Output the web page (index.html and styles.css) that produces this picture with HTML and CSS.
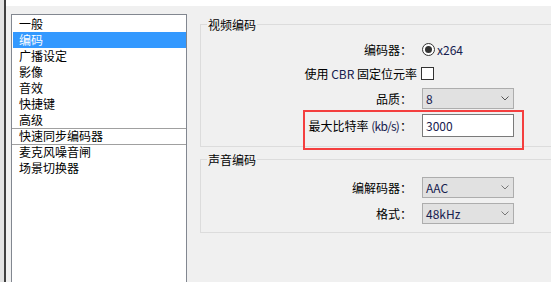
FILE: index.html
```
<!DOCTYPE html>
<html lang="zh-CN">
<head>
<meta charset="utf-8">
<title>设置</title>
<link rel="stylesheet" href="styles.css">
</head>
<body>
<div class="window">
  <div class="edge"></div>
  <div class="main">
    <div class="topbar"></div>
    <div class="content">
      <ul class="list">
        <li class="item">一般</li>
        <li class="item sel">编码</li>
        <li class="item">广播设定</li>
        <li class="item">影像</li>
        <li class="item">音效</li>
        <li class="item">快捷键</li>
        <li class="item">高级</li>
        <li class="item sep">快速同步编码器</li>
        <li class="item sep">麦克风噪音闸</li>
        <li class="item">场景切换器</li>
      </ul>
      <div class="panels">
        <section class="group g-video">
          <div class="group-title">视频编码</div>
          <div class="form form-video">
            <div class="label"><span>编码器<span class="colon">：</span></span></div>
            <div class="ctrl radio-wrap"><span class="radio"></span><span class="lat">x264</span></div>
            <div class="label label-check"><span>使用 <span class="lat">CBR</span> 固定位元率</span></div>
            <div class="ctrl"><span class="checkbox"></span></div>
            <div class="label"><span>品质<span class="colon">：</span></span></div>
            <div class="ctrl"><div class="combo"><span class="lat">8</span><svg class="chev" width="8" height="5" viewBox="0 0 8 5"><polyline points="0.5,0.5 4,4 7.5,0.5" fill="none" stroke="#555" stroke-width="1"/></svg></div></div>
            <div class="label"><span>最大比特率 <span class="lat kbs">(kb/s)</span><span class="colon">：</span></span></div>
            <div class="ctrl"><div class="input lat">3000</div></div>
          </div>
        </section>
        <section class="group g-audio">
          <div class="group-title">声音编码</div>
          <div class="form form-audio">
            <div class="label"><span>编解码器<span class="colon">：</span></span></div>
            <div class="ctrl"><div class="combo"><span class="lat">AAC</span><svg class="chev" width="8" height="5" viewBox="0 0 8 5"><polyline points="0.5,0.5 4,4 7.5,0.5" fill="none" stroke="#777" stroke-width="1"/></svg></div></div>
            <div class="label"><span>格式<span class="colon">：</span></span></div>
            <div class="ctrl"><div class="combo"><span class="lat">48kHz</span><svg class="chev" width="8" height="5" viewBox="0 0 8 5"><polyline points="0.5,0.5 4,4 7.5,0.5" fill="none" stroke="#777" stroke-width="1"/></svg></div></div>
          </div>
        </section>
      </div>
    </div>
  </div>
  <div class="mark"></div>
</div>
</body>
</html>
```
FILE: styles.css
```
html, body {
  margin: 0;
  padding: 0;
}
body {
  width: 551px;
  height: 282px;
  overflow: hidden;
  background: #f0f0f0;
  font-family: "Noto Sans CJK SC", sans-serif;
  font-size: 12px;
  color: #000;
}
.window {
  position: relative;
  display: flex;
  height: 282px;
  overflow: hidden;
}
.edge {
  flex: none;
  width: 4px;
  background: #e2e2e2;
  border-right: 2px solid #3f3f3f;
}
.main {
  flex: 1;
  display: flex;
  flex-direction: column;
  min-width: 0;
}
.topbar {
  flex: none;
  height: 6px;
  background: #fff;
}
.content {
  flex: 1;
  display: flex;
  gap: 13px;
  padding: 8px 0 0 5px;
  min-height: 0;
}
.list {
  flex: none;
  box-sizing: border-box;
  width: 176px;
  height: 290px;
  margin: 0;
  padding: 1px 0 0 1px;
  list-style: none;
  background: #fff;
  border: 1px solid #828790;
}
.item {
  height: 16px;
  line-height: 16px;
  padding-left: 6px;
  white-space: nowrap;
  overflow: hidden;
}
.item.sel {
  background: #3399ff;
  color: #fff;
}
.item.sep {
  margin-left: -1px;
  padding-left: 7px;
  background: linear-gradient(#a0a0a0, #a0a0a0) left top / 100% 1px no-repeat;
}
.panels {
  flex: none;
  width: 400px;
  display: flex;
  flex-direction: column;
  gap: 12px;
  padding-top: 10px;
}
.group {
  box-sizing: border-box;
  border: 1px solid #dcdcdc;
}
.g-video {
  height: 123px;
}
.g-audio {
  height: 74px;
}
.group-title {
  width: max-content;
  margin: -7px 0 0 6px;
  padding: 0 1px;
  line-height: 14px;
  background: #f0f0f0;
}
.form {
  display: grid;
  grid-template-columns: 211px 92px;
  column-gap: 10px;
}
.form-video {
  margin-top: 6px;
  grid-template-rows: 22px 26px 24px 30px;
}
.form-audio {
  margin-top: 7px;
  grid-template-rows: 26px 26px;
}
.label {
  display: flex;
  align-items: center;
  justify-content: flex-end;
  white-space: nowrap;
}
.label-check {
  margin-right: -5px;
}
.colon {
  font-family: "Noto Sans CJK JP", sans-serif;
}
.lat {
  color: #16204e;
}
.kbs {
  letter-spacing: -0.8px;
  margin-right: 1px;
}
.ctrl {
  display: flex;
  align-items: center;
}
.radio-wrap {
  gap: 2px;
}
.radio {
  box-sizing: border-box;
  width: 13px;
  height: 13px;
  border: 1px solid #333;
  border-radius: 50%;
  background: #fff;
  display: flex;
  align-items: center;
  justify-content: center;
}
.radio::after {
  content: "";
  width: 7px;
  height: 7px;
  border-radius: 50%;
  background: #333;
}
.checkbox {
  box-sizing: border-box;
  width: 13px;
  height: 13px;
  margin-left: -1px;
  border: 1px solid #333;
  background: #fff;
}
.combo {
  box-sizing: border-box;
  width: 92px;
  height: 21px;
  padding: 0 4px 0 3px;
  border: 1px solid #adadad;
  background: #e1e1e1;
  display: flex;
  align-items: center;
  justify-content: space-between;
}
.chev {
  display: block;
}
.input {
  box-sizing: border-box;
  width: 92px;
  height: 23px;
  padding-left: 3px;
  line-height: 21px;
  border: 1px solid #7a7a7a;
  background: #fff;
}
.mark {
  position: absolute;
  left: 303px;
  top: 110px;
  width: 221px;
  height: 40px;
  box-sizing: border-box;
  border: 2px solid #f43f3f;
}
```
